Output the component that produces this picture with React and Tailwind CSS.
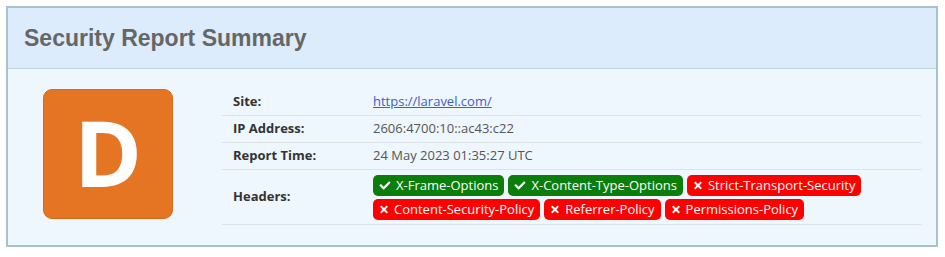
import React from 'react';
import { FaCheck, FaTimes } from 'react-icons/fa';

const rows = [
  { label: 'Site:', value: <a href="#" className="text-[#3f5fc4] underline">https://laravel.com/</a> },
  { label: 'IP Address:', value: '2606:4700:10::ac43:c22' },
  { label: 'Report Time:', value: '24 May 2023 01:35:27 UTC' },
];

const headers = [
  { name: 'X-Frame-Options', ok: true },
  { name: 'X-Content-Type-Options', ok: true },
  { name: 'Strict-Transport-Security', ok: false },
  { name: 'Content-Security-Policy', ok: false },
  { name: 'Referrer-Policy', ok: false },
  { name: 'Permissions-Policy', ok: false },
];

function Badge({ name, ok }) {
  return (
    <span
      className={
        'inline-flex items-center gap-[5px] h-[21px] px-[6px] rounded-[5px] text-white text-[13px] leading-none ' +
        (ok ? 'bg-[#0a7d0a]' : 'bg-[#ff0000]')
      }
    >
      {ok ? <FaCheck className="w-[12px] h-[11px]" /> : <FaTimes className="w-[10px] h-[11px]" />}
      {name}
    </span>
  );
}

export default function App() {
  return (
    <div className="w-[945px] h-[257px] bg-white pt-[6px] pl-[6px]" style={{ fontFamily: '"Open Sans", sans-serif' }}>
      <div className="w-[932px] h-[241px] border-2 border-[#a9c2c8] bg-[#eef6fe] flex flex-col">
        {/* Header */}
        <div className="h-[61px] bg-[#dcecfc] border-b border-[#c3d3db] flex items-center pl-[16px]">
          <h1 className="text-[23px] font-bold text-[#666666]" style={{ fontFamily: '"Liberation Sans", Arial, sans-serif' }}>
            Security Report Summary
          </h1>
        </div>

        {/* Body */}
        <div className="flex pt-[20px] pl-[35px] pr-[15px]">
          <div className="w-[130px] h-[130px] shrink-0 rounded-[9px] bg-[#e67523] border border-[#d9681a] flex items-center justify-center">
            <span className="text-white font-bold text-[92px] leading-none -mt-[4px]">D</span>
          </div>

          <div className="flex-1 ml-[49px] text-[13px]">
            {rows.map((r) => (
              <div key={r.label} className="flex items-center h-[27px] border-b border-[#dde2e6]">
                <div className="w-[151px] pl-[11px] font-bold text-[#333]">{r.label}</div>
                <div className="text-[#555]">{r.value}</div>
              </div>
            ))}
            <div className="flex items-center h-[55px] border-b border-[#dde2e6]">
              <div className="w-[151px] pl-[11px] font-bold text-[#333]">Headers:</div>
              <div className="flex flex-wrap gap-x-[4px] gap-y-[3px] w-[500px]">
                {headers.map((h) => (
                  <Badge key={h.name} {...h} />
                ))}
              </div>
            </div>
          </div>
        </div>
      </div>
    </div>
  );
}
